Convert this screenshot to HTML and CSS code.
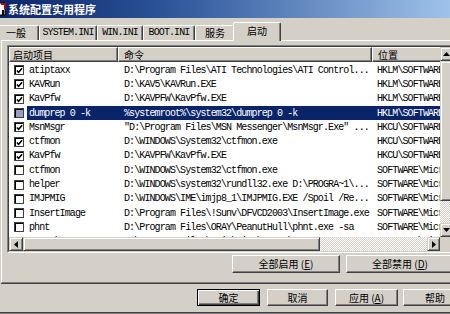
FILE: index.html
```html
<!DOCTYPE html>
<html lang="zh-CN">
<head>
<meta charset="utf-8">
<title>系统配置实用程序</title>
<link rel="stylesheet" href="styles.css">
</head>
<body>
<div class="window">
  <div class="titlebar">
    <svg class="icon" viewBox="0 0 16 16" width="16" height="16">
      <rect x="2" y="2" width="12" height="12" fill="#fff" stroke="#000" stroke-width="1"/>
      <path d="M10 3 L14 3 L14 8" fill="none" stroke="#c00000" stroke-width="2"/>
      <path d="M12 9 L12 14" stroke="#000" stroke-width="2"/>
    </svg>
    <span class="title-text">系统配置实用程序</span>
  </div>

  <div class="tabs">
    <div class="tab w-general">一般</div>
    <div class="tab mono w-system">SYSTEM.INI</div>
    <div class="tab mono w-win">WIN.INI</div>
    <div class="tab mono w-boot">BOOT.INI</div>
    <div class="tab w-svc">服务</div>
    <div class="tab active w-start">启动</div>
  </div>

  <div class="panel">
    <div class="lv">
      <div class="lv-inner">
        <div class="lv-top">
          <div class="lv-area">
            <div class="lv-header">
              <div class="hcell">启动项目</div>
              <div class="hcell">命令</div>
              <div class="hcell">位置</div>
            </div>
            <div class="lv-body mono">
              <div class="row">
                <div class="c-name"><span class="cb on"><svg viewBox="0 0 8 8"><path d="M1 4 L3 6 L7 1.5" fill="none" stroke="#000" stroke-width="1.8"/></svg></span><span class="nm">atiptaxx</span></div>
                <div class="c-cmd">D:\Program Files\ATI Technologies\ATI Control...</div>
                <div class="c-loc">HKLM\SOFTWARE</div>
              </div>
              <div class="row">
                <div class="c-name"><span class="cb on"><svg viewBox="0 0 8 8"><path d="M1 4 L3 6 L7 1.5" fill="none" stroke="#000" stroke-width="1.8"/></svg></span><span class="nm">KAVRun</span></div>
                <div class="c-cmd">D:\KAV5\KAVRun.EXE</div>
                <div class="c-loc">HKLM\SOFTWARE</div>
              </div>
              <div class="row">
                <div class="c-name"><span class="cb on"><svg viewBox="0 0 8 8"><path d="M1 4 L3 6 L7 1.5" fill="none" stroke="#000" stroke-width="1.8"/></svg></span><span class="nm">KavPfw</span></div>
                <div class="c-cmd">D:\KAVPFW\KavPfw.EXE</div>
                <div class="c-loc">HKLM\SOFTWARE</div>
              </div>
              <div class="row sel">
                <div class="c-name"><span class="cb selbox"></span><span class="nm">dumprep 0 -k</span></div>
                <div class="c-cmd">%systemroot%\system32\dumprep 0 -k</div>
                <div class="c-loc">HKLM\SOFTWARE</div>
              </div>
              <div class="row">
                <div class="c-name"><span class="cb on"><svg viewBox="0 0 8 8"><path d="M1 4 L3 6 L7 1.5" fill="none" stroke="#000" stroke-width="1.8"/></svg></span><span class="nm">MsnMsgr</span></div>
                <div class="c-cmd">"D:\Program Files\MSN Messenger\MsnMsgr.Exe" ...</div>
                <div class="c-loc">HKCU\SOFTWARE</div>
              </div>
              <div class="row">
                <div class="c-name"><span class="cb on"><svg viewBox="0 0 8 8"><path d="M1 4 L3 6 L7 1.5" fill="none" stroke="#000" stroke-width="1.8"/></svg></span><span class="nm">ctfmon</span></div>
                <div class="c-cmd">D:\WINDOWS\System32\ctfmon.exe</div>
                <div class="c-loc">HKCU\SOFTWARE</div>
              </div>
              <div class="row">
                <div class="c-name"><span class="cb on"><svg viewBox="0 0 8 8"><path d="M1 4 L3 6 L7 1.5" fill="none" stroke="#000" stroke-width="1.8"/></svg></span><span class="nm">KavPfw</span></div>
                <div class="c-cmd">D:\KAVPFW\KavPfw.EXE</div>
                <div class="c-loc">HKCU\SOFTWARE</div>
              </div>
              <div class="row">
                <div class="c-name"><span class="cb"></span><span class="nm">ctfmon</span></div>
                <div class="c-cmd">D:\WINDOWS\System32\ctfmon.exe</div>
                <div class="c-loc">SOFTWARE\Micr</div>
              </div>
              <div class="row">
                <div class="c-name"><span class="cb"></span><span class="nm">helper</span></div>
                <div class="c-cmd">D:\WINDOWS\system32\rundll32.exe D:\PROGRA~1\...</div>
                <div class="c-loc">SOFTWARE\Micr</div>
              </div>
              <div class="row">
                <div class="c-name"><span class="cb"></span><span class="nm">IMJPMIG</span></div>
                <div class="c-cmd">D:\WINDOWS\IME\imjp8_1\IMJPMIG.EXE /Spoil /Re...</div>
                <div class="c-loc">SOFTWARE\Micr</div>
              </div>
              <div class="row">
                <div class="c-name"><span class="cb"></span><span class="nm">InsertImage</span></div>
                <div class="c-cmd">D:\Program Files\!Sunv\DFVCD2003\InsertImage.exe</div>
                <div class="c-loc">SOFTWARE\Micr</div>
              </div>
              <div class="row">
                <div class="c-name"><span class="cb"></span><span class="nm">phnt</span></div>
                <div class="c-cmd">D:\Program Files\ORAY\PeanutHull\phnt.exe -sa</div>
                <div class="c-loc">SOFTWARE\Micr</div>
              </div>
              <div class="row">
                <div class="c-name"><span class="cb"></span><span class="nm">qttask</span></div>
                <div class="c-cmd">D:\Program Files\QuickTime\qttask.exe</div>
                <div class="c-loc">SOFTWARE\Micr</div>
              </div>
            </div>
          </div>
          <div class="vscroll">
            <div class="sbtn"><svg viewBox="0 0 7 4" class="arr-v"><path d="M0 4 L3.5 0 L7 4 Z" fill="#000"/></svg></div>
            <div class="vthumb"></div>
            <div class="vtrack"></div>
            <div class="sbtn"><svg viewBox="0 0 7 4" class="arr-v"><path d="M0 0 L3.5 4 L7 0 Z" fill="#000"/></svg></div>
          </div>
        </div>
        <div class="lv-bottom">
          <div class="hscroll">
            <div class="sbtn hbtn"><svg viewBox="0 0 4 7" class="arr-h"><path d="M4 0 L0 3.5 L4 7 Z" fill="#000"/></svg></div>
            <div class="hthumb"></div>
            <div class="htrack"></div>
            <div class="sbtn hbtn"><svg viewBox="0 0 4 7" class="arr-h"><path d="M0 0 L4 3.5 L0 7 Z" fill="#000"/></svg></div>
          </div>
          <div class="corner"></div>
        </div>
      </div>
    </div>
    <div class="panel-buttons">
      <div class="btn wide">全部启用 (<u>E</u>)</div>
      <div class="btn wide">全部禁用 (<u>D</u>)</div>
    </div>
  </div>

  <div class="footer">
    <div class="btn default b-ok">确定</div>
    <div class="btn b-cancel">取消</div>
    <div class="btn b-apply">应用 (<u>A</u>)</div>
    <div class="btn b-help">帮助</div>
  </div>
  <div class="bottom-edge"></div>
</div>
</body>
</html>
```

FILE: styles.css
```css
* { box-sizing: border-box; }

body {
  margin: 0;
  width: 450px;
  height: 314px;
  overflow: hidden;
  background: #d4d0c8;
  font-family: "Noto Sans CJK SC", "Liberation Sans", sans-serif;
  font-size: 10px;
  color: #000;
}

.mono {
  font-family: "Liberation Mono", "Noto Sans CJK SC", monospace;
  font-size: 10px;
  letter-spacing: -0.9px;
}

.window {
  width: 470px;
  height: 314px;
  display: flex;
  flex-direction: column;
}

/* title bar */
.titlebar {
  height: 18px;
  flex: none;
  display: flex;
  align-items: center;
  background: linear-gradient(to right, #0a246a 0%, #2c5498 35%, #a6caf0 100%);
  color: #fff;
  font-weight: bold;
  font-size: 11px;
  overflow: hidden;
}
.titlebar .icon {
  width: 16px;
  height: 16px;
  margin-left: -9px;
  margin-right: 1px;
  flex: none;
}
.title-text { line-height: 1; }

/* tabs */
.tabs {
  height: 22px;
  flex: none;
  display: flex;
  align-items: flex-end;
  margin-left: -7px;
}
.tab {
  height: 15px;
  display: flex;
  align-items: center;
  justify-content: center;
  border-top: 1px solid #fff;
  border-left: 1px solid #fff;
  border-right: 1px solid #404040;
  box-shadow: inset -1px 0 #808080;
  border-radius: 2px 2px 0 0;
  background: #d4d0c8;
  line-height: 1;
}
.tab.active {
  height: 19px;
  margin: 0 -2px -1px -2px;
  padding-bottom: 2px;
  position: relative;
  z-index: 1;
}
.w-general { width: 46px; }
.w-system { width: 58px; }
.w-win { width: 46px; }
.w-boot { width: 52px; }
.w-svc { width: 40px; }
.w-start { width: 48px; }

/* panel */
.panel {
  flex: none;
  height: 243px;
  margin-left: 1px;
  border-top: 1px solid #fff;
  border-left: 1px solid #fff;
  border-bottom: 1px solid #808080;
  box-shadow: 0 1px 0 #404040;
  padding: 4px 0 0 5px;
}

.lv {
  width: 448px;
  border: 1px solid;
  border-color: #808080 #fff #fff #808080;
}
.lv-inner {
  border: 1px solid;
  border-color: #404040 #d4d0c8 #d4d0c8 #404040;
}
.lv-top {
  display: flex;
  height: 190px;
}
.lv-area {
  width: 431px;
  flex: none;
  display: flex;
  flex-direction: column;
  background: #fff;
  overflow: hidden;
}
.lv-header {
  height: 15px;
  flex: none;
  display: grid;
  grid-template-columns: 109px 254px 120px;
  background: #d4d0c8;
}
.hcell {
  border-top: 1px solid #fff;
  border-left: 1px solid #fff;
  border-right: 1px solid #404040;
  border-bottom: 1px solid #404040;
  box-shadow: inset -1px -1px 0 #808080;
  padding-left: 3px;
  display: flex;
  align-items: center;
  line-height: 1;
  white-space: nowrap;
}
.hcell:nth-child(2) { padding-left: 5px; }
.hcell:nth-child(3) { padding-left: 5px; }

.lv-body {
  flex: 1;
  padding-top: 1px;
  overflow: hidden;
}
.row {
  height: 14.3px;
  display: grid;
  grid-template-columns: 109px 254px 120px;
  align-items: stretch;
  white-space: nowrap;
}
.row > div {
  display: flex;
  align-items: center;
  overflow: hidden;
}
.c-name { padding-left: 5px; }
.c-cmd { padding-left: 6px; }
.c-loc { padding-left: 5px; }
.nm {
  padding-left: 2px;
  margin-left: 3px;
  flex: 1;
  align-self: stretch;
  display: flex;
  align-items: center;
}

.cb {
  width: 10px;
  height: 10px;
  flex: none;
  background: #fff;
  border: 1px solid #404040;
  box-shadow: inset 1px 1px 0 #000;
  display: flex;
  align-items: center;
  justify-content: center;
}
.cb svg { width: 7px; height: 7px; margin: 1px 0 0 1px; }
.cb.selbox { background: #9c9cc8; }

.row.sel .nm,
.row.sel .c-cmd,
.row.sel .c-loc {
  background: #0a246a;
  color: #fff;
}

/* scrollbars */
.vscroll {
  width: 13px;
  flex: none;
  display: flex;
  flex-direction: column;
}
.sbtn {
  height: 14px;
  flex: none;
  background: #d4d0c8;
  border: 1px solid;
  border-color: #d4d0c8 #404040 #404040 #d4d0c8;
  box-shadow: inset 1px 1px 0 #fff, inset -1px -1px 0 #808080;
  display: flex;
  align-items: center;
  justify-content: center;
}
.arr-v { width: 7px; height: 4px; }
.arr-h { width: 4px; height: 7px; }
.vthumb {
  height: 140px;
  flex: none;
  background: #d4d0c8;
  border: 1px solid;
  border-color: #d4d0c8 #404040 #404040 #d4d0c8;
  box-shadow: inset 1px 1px 0 #fff, inset -1px -1px 0 #808080;
}
.vtrack,
.htrack {
  flex: 1;
  background: repeating-conic-gradient(#fff 0 25%, #d4d0c8 0 50%) 0 0 / 2px 2px;
}

.lv-bottom {
  display: flex;
  height: 14px;
}
.hscroll {
  width: 431px;
  flex: none;
  display: flex;
}
.hbtn { width: 14px; height: 14px; }
.hscroll .hbtn:last-child { width: 13px; }
.hthumb {
  width: 297px;
  flex: none;
  background: #d4d0c8;
  border: 1px solid;
  border-color: #d4d0c8 #404040 #404040 #d4d0c8;
  box-shadow: inset 1px 1px 0 #fff, inset -1px -1px 0 #808080;
}
.corner { flex: 1; background: #d4d0c8; }

/* buttons */
.panel-buttons {
  display: flex;
  gap: 6px;
  margin-top: 2px;
  padding-left: 225px;
}
.btn {
  height: 18px;
  display: flex;
  align-items: center;
  justify-content: center;
  background: #d4d0c8;
  border: 1px solid;
  border-color: #fff #404040 #404040 #fff;
  box-shadow: inset -1px -1px 0 #808080;
  line-height: 1;
  white-space: nowrap;
  flex: none;
}
.btn u { text-decoration: underline; text-underline-offset: 1px; }
.wide { width: 108px; }
.btn.default {
  border: 1px solid #000;
  box-shadow: inset 1px 1px 0 #fff, inset -1px -1px 0 #404040, inset -2px -2px 0 #808080;
}

.footer {
  display: flex;
  padding: 6px 0 0 197px;
}
.footer .btn { height: 17px; }
.b-ok { width: 63px; }
.b-cancel { width: 61px; margin-left: 7px; }
.b-apply { width: 63px; margin-left: 7px; }
.b-help { width: 64px; margin-left: 5px; }

.bottom-edge {
  margin-top: auto;
  height: 2px;
  border-top: 1px solid #404040;
  background: #808080;
}
```
